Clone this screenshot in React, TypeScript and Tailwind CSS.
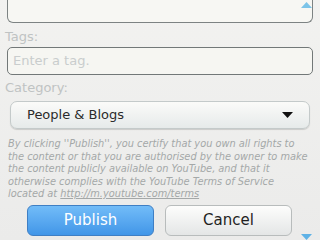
export default function App() {
  return (
    <div className="relative w-[320px] h-[240px] overflow-hidden bg-gradient-to-b from-[#f2f2f0] to-[#ebebea] font-['DejaVu_Sans',sans-serif]">
      <div className="mx-[7px] h-[23px] rounded-b-[6px] border-x border-b border-[#7d8383] bg-[#f7f7f3]" />

      <div className="mt-[6px] pl-[5px] text-[13px] leading-[16px] text-[#bfc3c3]">Tags:</div>
      <div className="mx-[7px] mt-[2px] flex h-[28px] items-center rounded-[5px] border border-[#727878] bg-[#f6f6f2] pl-[5px] text-[13px] text-[#c9cdcd]">
        Enter a tag.
      </div>

      <div className="mt-[5px] pl-[5px] text-[13px] leading-[16px] text-[#bfc3c3]">Category:</div>
      <div className="mx-[10px] mt-[5px] flex h-[28px] items-center justify-between rounded-[7px] border border-[#c4caca] bg-gradient-to-b from-[#fbfbf9] to-[#e6eaea] pl-[16px] pr-[16px] text-[13px] text-[#2b2b2b] shadow-[0_1px_1px_rgba(0,0,0,0.15)]">
        <span>People &amp; Blogs</span>
        <svg width="11" height="6" viewBox="0 0 11 6">
          <path d="M0 0 H11 L5.5 6 Z" fill="#111" />
        </svg>
      </div>

      <p className="mt-[9px] pl-[8px] text-[9.8px] italic leading-[12.5px] text-[#a4a8a8]">
        By clicking ''Publish'', you certify that you own all rights to
        <br />
        the content or that you are authorised by the owner to make
        <br />
        the content publicly available on YouTube, and that it
        <br />
        otherwise complies with the YouTube Terms of Service
        <br />
        located at <span className="underline">http://m.youtube.com/terms</span>
      </p>

      <div className="mt-[4px] flex gap-[11px] pl-[27px]">
        <button className="h-[31px] w-[127px] rounded-[6px] border border-[#3f7fc4] bg-gradient-to-b from-[#72bcf8] to-[#4196e8] text-[15px] text-white">
          Publish
        </button>
        <button className="h-[31px] w-[127px] rounded-[6px] border border-[#b8bcbc] bg-gradient-to-b from-[#fdfdfc] to-[#e4e6e6] text-[15px] text-[#1f1f1f]">
          Cancel
        </button>
      </div>

      <svg className="absolute right-[8px] top-[2px]" width="11" height="6" viewBox="0 0 11 6">
        <path d="M5.5 0 L11 6 H0 Z" fill="#7cc4e8" />
      </svg>
      <svg className="absolute right-[8px] bottom-[0px]" width="11" height="6" viewBox="0 0 11 6">
        <path d="M0 0 H11 L5.5 6 Z" fill="#5fb2e6" />
      </svg>
    </div>
  );
}
